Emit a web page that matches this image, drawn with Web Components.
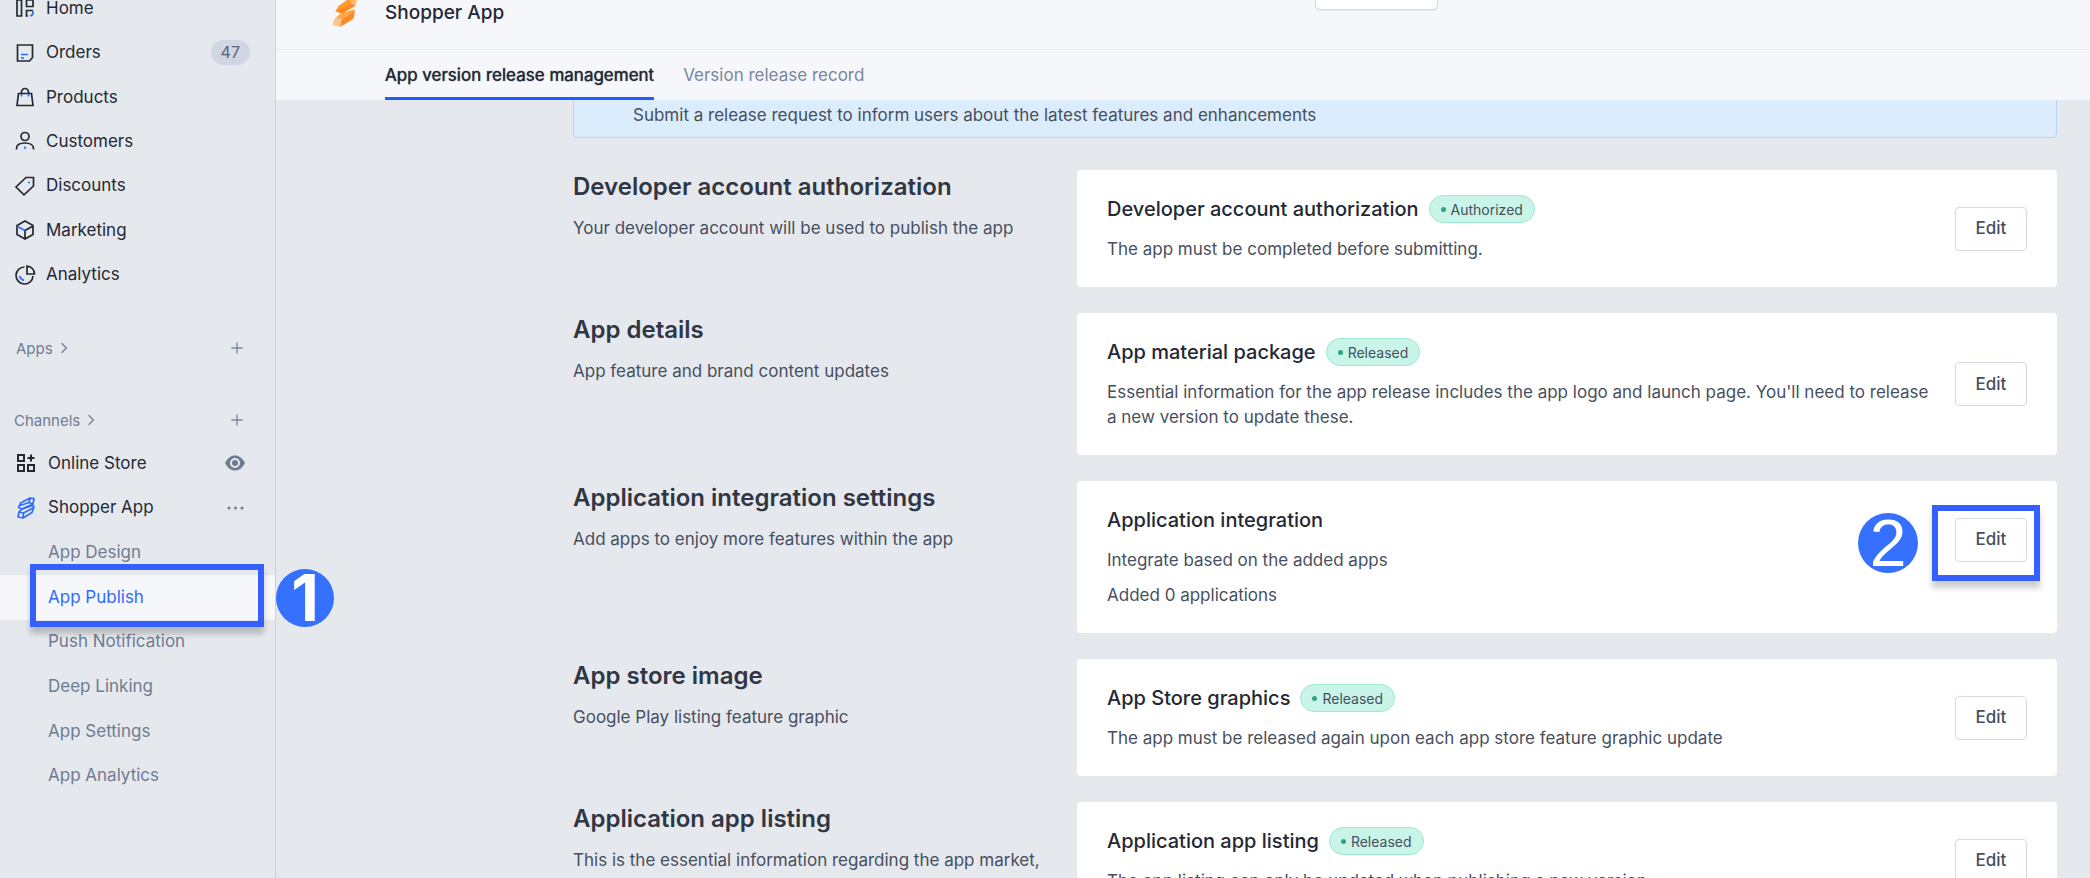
<!DOCTYPE html>
<html lang="en">
<head>
<meta charset="utf-8">
<title>Shopper App</title>
<style>
  body {
    margin: 0;
    font-family: Inter, "Liberation Sans", sans-serif;
    font-size: 17px;
    line-height: 25px;
    color: #474f5e;
    background: #e5e8ed;
  }
</style>
</head>
<body>
<admin-shell>
  <side-nav slot="side"></side-nav>
  <page-header slot="header" title="Shopper App"></page-header>
  <info-banner>Submit a release request to inform users about the latest features and enhancements</info-banner>
  <release-section heading="Developer account authorization" text="Your developer account will be used to publish the app">
    <release-card heading="Developer account authorization" status="Authorized">The app must be completed before submitting.</release-card>
  </release-section>
  <release-section heading="App details" text="App feature and brand content updates">
    <release-card heading="App material package" status="Released">Essential information for the app release includes the app logo and launch page. You'll need to release a new version to update these.</release-card>
  </release-section>
  <release-section heading="Application integration settings" text="Add apps to enjoy more features within the app">
    <release-card heading="Application integration" note="Added 0 applications" step="2">Integrate based on the added apps</release-card>
  </release-section>
  <release-section heading="App store image" text="Google Play listing feature graphic">
    <release-card heading="App Store graphics" status="Released">The app must be released again upon each app store feature graphic update</release-card>
  </release-section>
  <release-section heading="Application app listing" text="This is the essential information regarding the app market,">
    <release-card heading="Application app listing" status="Released">The app listing can only be updated when publishing a new version</release-card>
  </release-section>
</admin-shell>

<script>
const icons = {
  home: '<path d="M2 2h4.5v16H2zM11.500 2H18v6.500h-6.500zM18 12.500h-6.500V18H13"/><path class="accent" d="M18 13v1.500a3.500 3.500 0 0 1-3 3.500"/>',
  orders: '<path d="M2.500 2h15v12.500l-3 3.500h-12z"/><path class="accent" d="M6 11.500h7M6 15h3"/>',
  products: '<path d="M3.500 6.500h13l1.500 12H2zM6.500 6.500V5a3.500 3.500 0 0 1 7 0v1.500"/><path class="accent" d="M6.500 7v2.500M13.500 7v2.500"/>',
  customers: '<circle cx="10" cy="5.500" r="4"/><path d="M1.500 18.500v-1c0-3.500 3.500-5.500 8.500-5.500s8.500 2 8.500 5.500v1"/><path class="accent" d="M10 15.500v2.500"/>',
  discounts: '<path d="M11 1.500h7.500V10L9 18.800 1 11z"/><path class="accent" d="M13 6.500h2"/>',
  marketing: '<path d="M10 1l8 4.500v9L10 19l-8-4.500v-9zM10 19v-8.500l8-4.500"/><path class="accent" d="M2.500 6.500L10 10.500"/>',
  analytics: '<path d="M9.500 2a8.500 8.500 0 1 0 8.500 9"/><path d="M12 1v8h7.500A8 8 0 0 0 12 1z"/><path class="accent" d="M4.500 11c.500 2 2 3.500 4.500 4.500"/>',
  store: '<path stroke-width="2" d="M2 2h6v6H2zM2 12h6v6H2zM12 12h6v6h-6zM15 1.500v7M11.500 5h7"/>',
  shopper: '<g class="blue"><path d="M4.500 5L14 0l4 .500-1 5.500L6 11 2.500 9.500zM14 0l-1 4.500 4 1.500M4 7.500l9-3"/><path d="M6 11L16.500 7.500l1.500 1-2 6L7 20l-5-1 1-5zM3 14l4.500 1L7 20M7.500 15l9.500-5M3 14l3-3"/></g>',
  eye: '<path fill="#6f7c92" stroke="none" d="M0 10C2.500 5 6 2.500 10 2.500S17.500 5 20 10c-2.500 5-6 7.500-10 7.500S2.500 15 0 10z"/><circle cx="10" cy="10" r="4" stroke="#e5e8ed" stroke-width="2" fill="#6f7c92"/>',
  dots: '<g fill="#6f7c92" stroke="none"><circle cx="4" cy="10" r="1.500"/><circle cx="10.500" cy="10" r="1.500"/><circle cx="17" cy="10" r="1.500"/></g>',
  plus: '<path class="muted" d="M10 3v14M3 10h14"/>',
  chevron: '<path class="muted" stroke-width="2.500" d="M6 2l8 8-8 8"/>',
  logo: '<g stroke="none"><path fill="#ff9a32" d="M5 6L13.500 0h4L16 6 7 11 3 9.500z"/><path fill="#ffbd78" d="M13 0h5l-1.500 5.500-3-1z"/><path fill="#ff8a1f" d="M3 9.500L13.500 4.500 16 6 7 11z"/><path fill="#ffa64a" d="M3 14l4-3.500 7.500-2 1.500.500-9 6z"/><path fill="#ff8a1f" d="M7 15l9-6-1 5.500L6 20z"/><path fill="#ffc488" d="M2.500 14L7 15 6 20l-5-1.500z"/></g>'
};

class UiIcon extends HTMLElement {
  connectedCallback() {
    this.attachShadow({ mode: 'open' });
    this.shadowRoot.innerHTML = `
      <style>
        :host { display: block; flex: none; width: 20px; height: 20px; }
        svg { display: block; width: 100%; height: 100%; fill: none; stroke: #242833; stroke-width: 1.7; overflow: visible; }
        .accent { stroke: #2f6bff; }
        .blue { stroke: #2f6bff; stroke-linejoin: round; }
        .muted { stroke: #7a869b; }
      </style>
      <svg viewBox="0 0 20 20" aria-hidden="true">${icons[this.getAttribute('name')]}</svg>
    `;
  }
}

// numbered pointer with a frame around whatever it is placed in
class StepMarker extends HTMLElement {
  connectedCallback() {
    this.attachShadow({ mode: 'open' });
    this.shadowRoot.innerHTML = `
      <style>
        :host { display: block; position: absolute; inset: var(--frame); z-index: 2; pointer-events: none; border: 6px solid #365fff; box-shadow: 0 7px 6px rgba(0, 0, 0, 0.2); }
        span {
          position: absolute;
          top: var(--dot-top);
          left: var(--dot-left);
          width: var(--dot-size);
          height: var(--dot-size);
          border-radius: 50%;
          background: #3570ff;
          color: #fff;
          font: var(--dot-font);
          line-height: var(--dot-size);
          text-align: center;
        }
      </style>
      <span><slot></slot></span>
    `;
  }
}

class SideNav extends HTMLElement {
  connectedCallback() {
    const main = ['Home', 'Orders', 'Products', 'Customers', 'Discounts', 'Marketing', 'Analytics'];
    const pages = ['App Design', 'App Publish', 'Push Notification', 'Deep Linking', 'App Settings', 'App Analytics'];
    this.attachShadow({ mode: 'open' });
    this.shadowRoot.innerHTML = `
      <style>
        :host { display: block; }
        nav { display: flex; flex-direction: column; gap: 30px; margin-top: -14px; }
        ul { display: grid; grid-auto-rows: 1fr; margin: 0; padding: 0; list-style: none; }
        .main { height: 311px; }
        .channels { height: 357px; }
        li { position: relative; display: flex; align-items: center; padding: 0 25px 0 15px; }
        a { display: flex; flex: 1; align-items: center; gap: 11px; color: #242833; text-decoration: none; }
        .channels li { padding: 0 30px 0 16px; }
        .channels a { gap: 12px; }
        .channels .page { padding-left: 48px; }
        .page a { color: #6f7c92; }
        .page.active { background: #f6f7fb; }
        .page.active a { color: #2f6bff; }
        .count { padding: 0 10px; border-radius: 13px; background: #d0d6e3; color: #5a6475; font-size: 16px; }
        header { display: flex; align-items: center; gap: 5px; height: 42px; padding: 0 30px 0 14px; color: #6f7c92; font-size: 15px; }
        header.apps { padding-left: 16px; }
        header ui-icon { width: 12px; height: 12px; }
        button { display: flex; padding: 0; border: 0; background: none; }
        header button { margin-left: auto; }
        header button ui-icon { width: 16px; height: 16px; }
        step-marker { --frame: -11px 11px -7px 30px; --dot-top: -1px; --dot-left: 240px; --dot-size: 58px; --dot-font: 700 64px Inter, sans-serif; }
      </style>
      <nav>
        <ul class="main">
          ${main.map(name => `
            <li><a href="#"><ui-icon name="${name.toLowerCase()}"></ui-icon>${name}</a>${name === 'Orders' ? '<span class="count">47</span>' : ''}</li>`).join('')}
        </ul>
        <header class="apps">Apps<ui-icon name="chevron"></ui-icon><button aria-label="Add app"><ui-icon name="plus"></ui-icon></button></header>
        <div>
          <header>Channels<ui-icon name="chevron"></ui-icon><button aria-label="Add channel"><ui-icon name="plus"></ui-icon></button></header>
          <ul class="channels">
            <li><a href="#"><ui-icon name="store"></ui-icon>Online Store</a><button aria-label="View store"><ui-icon name="eye"></ui-icon></button></li>
            <li><a href="#"><ui-icon name="shopper"></ui-icon>Shopper App</a><button aria-label="More"><ui-icon name="dots"></ui-icon></button></li>
            ${pages.map(name => name === 'App Publish'
              ? `<li class="page active"><a href="#" aria-current="page">${name}</a><step-marker>1</step-marker></li>`
              : `<li class="page"><a href="#">${name}</a></li>`).join('')}
          </ul>
        </div>
      </nav>
    `;
  }
}

class PageHeader extends HTMLElement {
  connectedCallback() {
    this.attachShadow({ mode: 'open' });
    this.shadowRoot.innerHTML = `
      <style>
        :host { display: block; position: relative; z-index: 1; margin-top: -25px; background: #f6f7fb; }
        .bar { display: flex; align-items: center; height: 74px; padding-left: 55px; border-bottom: 1px solid #eaecf1; }
        .bar > ui-icon { width: 30px; height: 30px; }
        h1 { margin: 0 0 0 24px; color: #242833; font-size: 19px; font-weight: 500; }
        .menu { align-self: flex-start; width: 123px; height: 35px; margin: 0 652px 0 auto; border: 1px solid #d5daea; border-radius: 5px; background: #fff; box-shadow: 0 1px 1px #e1e4ee; }
        .tabs { display: flex; gap: 29px; height: 50px; padding-left: 109px; }
        a { display: flex; align-items: center; border-bottom: 3px solid transparent; border-top: 4px solid transparent; box-sizing: border-box; color: #7a869b; text-decoration: none; }
        a[aria-current] { border-bottom-color: #205cff; color: #242833; text-shadow: 0 0 1px #242833; }
      </style>
      <div class="bar">
        <ui-icon name="logo"></ui-icon>
        <h1>${this.getAttribute('title')}</h1>
        <button class="menu" aria-label="Menu"></button>
      </div>
      <nav class="tabs">
        <a href="#" aria-current="page">App version release management</a>
        <a href="#">Version release record</a>
      </nav>
    `;
  }
}

class InfoBanner extends HTMLElement {
  connectedCallback() {
    this.attachShadow({ mode: 'open' });
    this.shadowRoot.innerHTML = `
      <style>
        :host { display: block; margin: -40px 0 6px; padding: 42px 60px 9px 59px; border: 1px solid #b9d3f8; border-radius: 4px; background: #dbecfc; }
      </style>
      <slot></slot>
    `;
  }
}

class ReleaseSection extends HTMLElement {
  connectedCallback() {
    this.attachShadow({ mode: 'open' });
    this.shadowRoot.innerHTML = `
      <style>
        :host { display: grid; grid-template-columns: 24fr 49fr; gap: 24px; align-items: start; }
        h2 { margin: 0 0 12px; color: #303644; font-size: 24px; font-weight: 600; line-height: 34px; }
        p { margin: 0; }
      </style>
      <div>
        <h2>${this.getAttribute('heading')}</h2>
        <p>${this.getAttribute('text')}</p>
      </div>
      <slot></slot>
    `;
  }
}

class StatusBadge extends HTMLElement {
  connectedCallback() {
    this.attachShadow({ mode: 'open' });
    this.shadowRoot.innerHTML = `
      <style>
        :host { display: flex; align-items: center; gap: 5px; height: 26px; padding: 0 11px; border: 1px solid #9fe8d2; border-radius: 14px; background: #c9f5e8; font-size: 14px; }
        i { width: 5px; height: 5px; border-radius: 50%; background: #2fa580; }
      </style>
      <i></i><slot></slot>
    `;
  }
}

class ReleaseCard extends HTMLElement {
  connectedCallback() {
    const status = this.getAttribute('status');
    const note = this.getAttribute('note');
    const step = this.getAttribute('step');
    this.attachShadow({ mode: 'open' });
    this.shadowRoot.innerHTML = `
      <style>
        :host { display: block; padding: 25px 30px; border-radius: 4px; background: #fff; }
        .row { display: flex; align-items: center; justify-content: space-between; gap: 16px; }
        .title { display: flex; align-items: center; gap: 10px; height: 28px; margin-bottom: 14px; }
        h3 { margin: 0; color: #242833; font-size: 20px; font-weight: 500; }
        p { margin: 0; }
        .note { margin-top: 10px; }
        .action { position: relative; flex: none; }
        button { display: block; width: 72px; height: 44px; padding: 0; border: 1px solid #d3d9e8; border-radius: 4px; background: #fff; color: #474f5e; font: inherit; font-weight: 500; }
        step-marker { --frame: -13px -13px -19px -23px; --dot-top: 2px; --dot-left: -80px; --dot-size: 60px; --dot-font: 400 66px "Liberation Sans", sans-serif; }
      </style>
      <div class="row">
        <div>
          <div class="title"><h3>${this.getAttribute('heading')}</h3>${status ? `<status-badge>${status}</status-badge>` : ''}</div>
          <p><slot></slot></p>
        </div>
        <div class="action"><button>Edit</button>${step ? `<step-marker>${step}</step-marker>` : ''}</div>
      </div>
      ${note ? `<p class="note">${note}</p>` : ''}
    `;
  }
}

class AdminShell extends HTMLElement {
  connectedCallback() {
    this.attachShadow({ mode: 'open' });
    this.shadowRoot.innerHTML = `
      <style>
        :host { display: grid; grid-template-columns: 276px 1fr; height: 100vh; overflow: hidden; }
        aside { position: relative; z-index: 3; box-sizing: border-box; border-right: 1px solid #ccd0da; }
        main { display: flex; flex-direction: column; min-width: 0; overflow: hidden; }
        .content { display: flex; flex-direction: column; gap: 26px; padding: 0 33px 26px 297px; }
      </style>
      <aside><slot name="side"></slot></aside>
      <main>
        <slot name="header"></slot>
        <div class="content"><slot></slot></div>
      </main>
    `;
  }
}

customElements.define('ui-icon', UiIcon);
customElements.define('step-marker', StepMarker);
customElements.define('side-nav', SideNav);
customElements.define('page-header', PageHeader);
customElements.define('info-banner', InfoBanner);
customElements.define('release-section', ReleaseSection);
customElements.define('status-badge', StatusBadge);
customElements.define('release-card', ReleaseCard);
customElements.define('admin-shell', AdminShell);
</script>
</body>
</html>
